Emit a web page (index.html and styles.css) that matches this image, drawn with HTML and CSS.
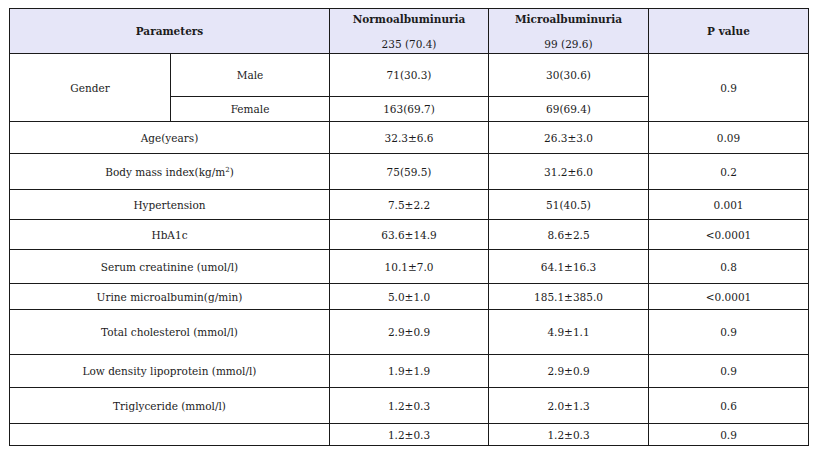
FILE: index.html
```html
<!DOCTYPE html>
<html>
<head>
<meta charset="utf-8">
<link rel="stylesheet" href="styles.css">
</head>
<body>
<table class="data">
  <colgroup>
    <col class="c1"><col class="c2"><col class="c3"><col class="c4"><col class="c5">
  </colgroup>
  <tr class="h45 head">
    <th colspan="2">Parameters</th>
    <th><div class="l1">Normoalbuminuria</div><div class="l2">235 (70.4)</div></th>
    <th><div class="l1">Microalbuminuria</div><div class="l2">99 (29.6)</div></th>
    <th>P value</th>
  </tr>
  <tr class="h43">
    <td rowspan="2">Gender</td>
    <td>Male</td>
    <td>71(30.3)</td>
    <td>30(30.6)</td>
    <td rowspan="2">0.9</td>
  </tr>
  <tr class="h25">
    <td>Female</td>
    <td>163(69.7)</td>
    <td>69(69.4)</td>
  </tr>
  <tr class="h32"><td colspan="2">Age(years)</td><td>32.3±6.6</td><td>26.3±3.0</td><td>0.09</td></tr>
  <tr class="h36"><td colspan="2">Body mass index(kg/m<sup>2</sup>)</td><td>75(59.5)</td><td>31.2±6.0</td><td>0.2</td></tr>
  <tr class="h30"><td colspan="2">Hypertension</td><td>7.5±2.2</td><td>51(40.5)</td><td>0.001</td></tr>
  <tr class="h30"><td colspan="2">HbA1c</td><td>63.6±14.9</td><td>8.6±2.5</td><td>&lt;0.0001</td></tr>
  <tr class="h34"><td colspan="2">Serum creatinine (umol/l)</td><td>10.1±7.0</td><td>64.1±16.3</td><td>0.8</td></tr>
  <tr class="h26"><td colspan="2">Urine microalbumin(g/min)</td><td>5.0±1.0</td><td>185.1±385.0</td><td>&lt;0.0001</td></tr>
  <tr class="h45"><td colspan="2">Total cholesterol (mmol/l)</td><td>2.9±0.9</td><td>4.9±1.1</td><td>0.9</td></tr>
  <tr class="h33"><td colspan="2">Low density lipoprotein (mmol/l)</td><td>1.9±1.9</td><td>2.9±0.9</td><td>0.9</td></tr>
  <tr class="h36"><td colspan="2">Triglyceride (mmol/l)</td><td>1.2±0.3</td><td>2.0±1.3</td><td>0.6</td></tr>
  <tr class="h22"><td colspan="2"></td><td>1.2±0.3</td><td>1.2±0.3</td><td>0.9</td></tr>
</table>
</body>
</html>
```

FILE: styles.css
```css
html, body {
  margin: 0;
  padding: 0;
  background: #ffffff;
}
body {
  padding: 8px 0 0 9px;
  font-family: "DejaVu Serif", "Liberation Serif", serif;
  font-size: 10.5px;
  color: #1c1c1c;
}
.data {
  border-collapse: collapse;
  table-layout: fixed;
  width: 800px;
}
.c1 { width: 161px; }
.c2 { width: 159px; }
.c3 { width: 159px; }
.c4 { width: 160px; }
.c5 { width: 160px; }
.data th, .data td {
  border: 1px solid #1a1a1a;
  text-align: center;
  vertical-align: middle;
  padding: 0;
  line-height: 14px;
}
.head th {
  background: #e6e6f8;
  font-weight: bold;
}
.head .l1 { font-weight: bold; margin-bottom: 11px; }
.head .l2 { font-weight: normal; }
sup { font-size: 7px; line-height: 0; vertical-align: 4px; }
.h45 { height: 45px; }
.h43 { height: 43px; }
.h36 { height: 36px; }
.h34 { height: 34px; }
.h33 { height: 33px; }
.h32 { height: 32px; }
.h30 { height: 30px; }
.h26 { height: 26px; }
.h25 { height: 25px; }
.h22 { height: 22px; }
```
